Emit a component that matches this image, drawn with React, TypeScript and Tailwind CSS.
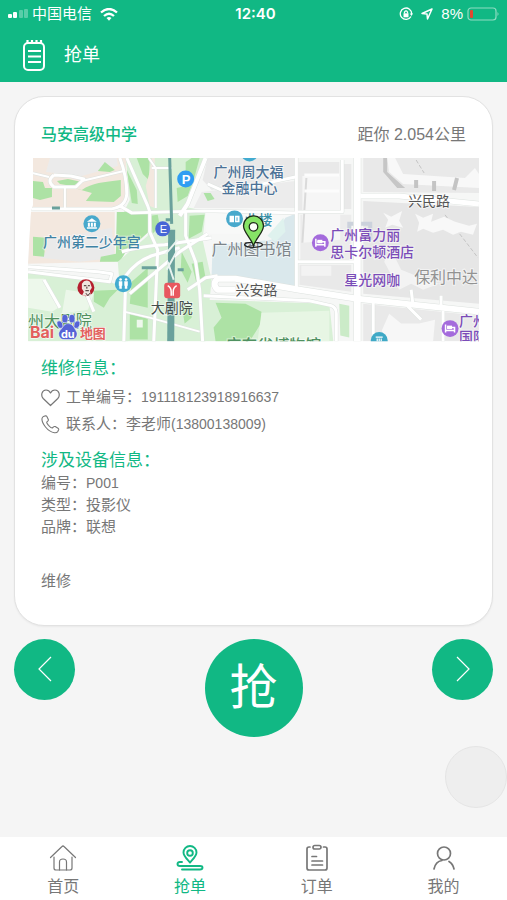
import React from 'react';

type Road = { d: string; w: number };
type Area = { d: string; fill: string };
type Label = { text: string; x: number; y: number; size: number; weight: number; fill: string };

const MINT = '#d8f0d6';
const GREEN = '#ade2a5';
const PEACH = '#f3e8df';
const GRAY = '#e9e9e9';

const areas: Area[] = [
  // upper left block
  { d: 'M28 158H126L128 200L120 208H28Z', fill: PEACH },
  { d: 'M50 158H117L118 166L82 176L46 172Z', fill: '#ebebeb' },
  { d: 'M33 181L43 182L45 188L52 188L52 197L40 200L33 198Z', fill: GREEN },
  { d: 'M98 171L105 162L115 170L110 172Z', fill: GREEN },
  { d: 'M57 181L68 179L82 182L72 186L60 184Z', fill: GREEN },
  { d: 'M74 188L82 190C92 183 104 182 121 180L121 196L114 202L86 201L92 193Z', fill: GREEN },
  // middle left block
  { d: 'M30 212H115V262L28 264Z', fill: PEACH },
  { d: 'M48 240L112 228L115 258L80 262L40 258L46 252Z', fill: '#eaeaea' },
  { d: 'M33 237L46 238L44 257L33 256Z', fill: GREEN },
  { d: 'M117 212H149V232L138 242L126 252L120 262L100 262L101 257L116 254Z', fill: GREEN },
  // green corridor
  { d: 'M126 158H205L186 207L206 211L203 240L212 280L206 342H124L118 262L148 236L149 212H124L130 200Z', fill: MINT },
  { d: 'M137 158H150L149 180L143 174Z', fill: GREEN },
  { d: 'M146 186L150 172L152 158H155V208L150 206Z', fill: PEACH },
  { d: 'M127 170L137 190L138 204L132 203Z', fill: GREEN },
  { d: 'M186 162L192 158H200L194 180L188 196L178 202L177 188L186 186Z', fill: GREEN },
  { d: 'M190 216L205 215L202 232L189 239Z', fill: GREEN },
  { d: 'M151 216L158 215L160 226L153 234Z', fill: GREEN },
  { d: 'M192 264L203 262L206 278L197 284Z', fill: GREEN },
  { d: 'M132 282L148 268V308L130 304Z', fill: GREEN },
  { d: 'M130 314L148 319V340H130Z', fill: GREEN },
  { d: 'M137 320H143V328H137Z', fill: '#eef8ec' },
  { d: 'M182 252L192 272L188 283L181 270Z', fill: GREEN },
  { d: 'M182 306L192 308L192 318L185 324Z', fill: GREEN },
  // park at the lower left
  { d: 'M28 270L110 282L128 290V342H28Z', fill: MINT },
  { d: 'M28 279H44L60 307L52 312L28 308Z', fill: '#edf8eb' },
  { d: 'M94 291L118 290L110 298L104 308L94 302Z', fill: GREEN },
  { d: 'M66 290L94 294L88 310L62 314Z', fill: '#ebf7e9' },
  // centre
  { d: 'M208 158H295V176L212 190L203 180Z', fill: GRAY },
  { d: 'M202 192L296 181V208H194Z', fill: '#ececec' },
  { d: 'M204 193L211 193L215 199L208 201Z', fill: GREEN },
  { d: 'M206 213H296V234H206Z', fill: '#f8f9f8' },
  { d: 'M213 246L272 240L286 218L296 214V288L250 282L212 275Z', fill: '#dae8ec' },
  { d: 'M268 236L284 218L286 232L276 242Z', fill: '#dff2ee' },
  { d: 'M203 300L330 304L334 342H203Z', fill: MINT },
  { d: 'M216 303L246 304L262 312V323L250 342H216L214 328L222 318Z', fill: GREEN },
  { d: 'M262 313L330 311V342H258Z', fill: '#e7f6e4' },
  { d: 'M340 304L350 306V338L341 336Z', fill: '#cbebc8' },
  // right blocks
  { d: 'M299 162H340V211H299Z', fill: GRAY },
  { d: 'M344 164H352V209H344Z', fill: GRAY },
  { d: 'M301 215H352V260H301Z', fill: '#ececec' },
  { d: 'M303 176H341V240L303 243Z', fill: '#f6f6f6' },
  { d: 'M300 265H352V292L300 285Z', fill: GRAY },
  { d: 'M364 158H480V193L364 192Z', fill: GRAY },
  { d: 'M364 201L480 207V304L364 294Z', fill: '#e6e6e6' },
  { d: 'M364 304L480 316V342H364Z', fill: GRAY },
  { d: 'M383 330L390 314L402 324H420L436 320L434 342H381Z', fill: '#f7f7f7' },
];

const roads: Road[] = [
  { d: 'M28 172L49 177M82 181L124 171M65 186V208', w: 2 },
  { d: 'M54 175L71 176L84 179L76 187L54 187Q46 181 54 175', w: 3 },
  { d: 'M28 209H112Q126 207 127 194Q127 176 120 158', w: 3 },
  { d: 'M127 158L148 206L150 212V232L158 250L154 342', w: 3 },
  { d: 'M149 158L156 168V208M152 168H172', w: 2 },
  { d: 'M120 206L132 213L205 211L296 213', w: 3 },
  { d: 'M206 158L188 204L180 216', w: 4 },
  { d: 'M186 212L186 236L196 262L200 290L203 342', w: 3 },
  { d: 'M28 267L98 272L112 274L110 282L28 272', w: 3 },
  { d: 'M122 252Q144 246 165 245L212 238', w: 3 },
  { d: 'M124 342L126 276Q136 262 152 256L180 248', w: 3 },
  { d: 'M130 294L180 252L208 234', w: 3 },
  { d: 'M124 312L150 318L200 332', w: 2 },
  { d: 'M44 280L60 308M86 293L94 312', w: 3 },
  { d: 'M188 290L206 278L218 276', w: 3 },
  { d: 'M208 184L226 192L296 177', w: 3 },
  { d: 'M297 158V288', w: 3 },
  { d: 'M343 160V212H297M297 262H357', w: 3 },
  { d: 'M358 158V342', w: 7 },
  { d: 'M361 196L400 196L480 204', w: 5 },
  { d: 'M236 290H218Q212 284 218 279H236L300 290L358 299L480 312', w: 6 },
  { d: 'M204 296L310 301L332 306Q337 308 337 314V342', w: 3 },
  { d: 'M374 303V342M408 306L422 320M444 311V342M412 290L414 306M442 296V308', w: 3 },
];

const labels: Label[] = [
  { text: '广州周大福', x: 214, y: 177, size: 14, weight: 500, fill: '#4b7297' },
  { text: '金融中心', x: 222, y: 193, size: 14, weight: 500, fill: '#4b7297' },
  { text: '广州第二少年宫', x: 43, y: 247, size: 14, weight: 500, fill: '#3f83a5' },
  { text: '业楼', x: 245, y: 225, size: 14, weight: 500, fill: '#3a90a8' },
  { text: '广州图书馆', x: 212, y: 255, size: 16, weight: 400, fill: '#7d8489' },
  { text: '兴民路', x: 409, y: 206, size: 14, weight: 400, fill: '#555555' },
  { text: '兴安路', x: 236, y: 295, size: 14, weight: 400, fill: '#555555' },
  { text: '大剧院', x: 151, y: 313, size: 14, weight: 400, fill: '#454d4a' },
  { text: '广州富力丽', x: 331, y: 240, size: 14, weight: 500, fill: '#7b4cb8' },
  { text: '思卡尔顿酒店', x: 331, y: 257, size: 14, weight: 500, fill: '#7b4cb8' },
  { text: '星光网咖', x: 345, y: 285, size: 14, weight: 500, fill: '#7b4cb8' },
  { text: '保利中达', x: 415, y: 283, size: 16, weight: 400, fill: '#929292' },
  { text: '广州', x: 460, y: 326, size: 14, weight: 500, fill: '#7b4cb8' },
  { text: '国际', x: 460, y: 342, size: 14, weight: 500, fill: '#7b4cb8' },
  { text: '州大剧院', x: 28, y: 327, size: 16, weight: 400, fill: '#4f9160' },
  { text: '广东省博物馆', x: 226, y: 351, size: 16, weight: 500, fill: '#4f9160' },
];

function MapView() {
  return (
    <svg viewBox="28 158 452 184" className="block w-full" role="img" aria-label="地图">
      <defs>
        <clipPath id="map-edge">
          <path d="M33 158H480V342H28V262L31 212L33 205Z" />
        </clipPath>
      </defs>
      <g clipPath="url(#map-edge)">
        <rect x="28" y="158" width="452" height="184" fill="#f6f7f6" />
        {areas.map((a) => (
          <path key={a.d} d={a.d} fill={a.fill} />
        ))}

        {/* Buildings */}
        <path d="M384 158V172L398 188H406L388 172V158Z" fill="#c6c6c6" />
        <path d="M388 158L390 172L404 184L480 188V174L476 168L466 178L404 174L396 158Z" fill="#f8f8f8" />
        <path d="M417 180V188M435 181V191M458 178L455 190" stroke="#c4c4c4" strokeWidth="4" />
        <path d="M417 160L425 173M446 215L479 258" stroke="#c4c4c4" strokeDasharray="4 2" />
        <path
          d="M384 213L392 217L403 211L400 221L404 228L393 225L386 228L389 220ZM416 214L424 218L434 214L432 222L445 217L456 222L470 226L478 224L474 235L462 232L454 235L444 230L434 233L424 229L418 232L420 223Z"
          fill="#f8f8f8"
        />
        <path d="M303 243L307 178" stroke="#dadada" strokeWidth="2" />
        <path d="M305 175H340M305 191H340" fill="none" stroke="#fcfcfc" strokeWidth="3" />
        <path d="M350 240V224H371V240" fill="none" stroke="#ccd2dc" strokeWidth="4" />
        <path d="M302 266H332V276H302ZM385 262L392 250L402 270L422 278L440 284L424 290L412 284L400 290Z" fill="#f3f3f3" />

        {/* Roads, casing first */}
        <g fill="none" stroke="#dde2df" strokeLinejoin="round">
          {roads.map((r) => (
            <path key={r.d} d={r.d} strokeWidth={r.w + 1} />
          ))}
        </g>
        <g fill="none" stroke="#ffffff" strokeLinejoin="round">
          {roads.map((r) => (
            <path key={r.d} d={r.d} strokeWidth={r.w} />
          ))}
        </g>

        {/* Metro line */}
        <g fill="none" stroke="#6aa19c">
          <path d="M170 158L172 224" strokeWidth="3" />
          <path d="M172 230L171 342" strokeWidth="7" />
          <path d="M142 268H157M178 270H184M52 208H60M166 220H171" strokeWidth="3" />
        </g>
        <path d="M166 254L178 240M167 270L178 250M174 280L168 262" stroke="#e9f3ef" strokeWidth="2" />

        <g
          fontFamily='"Noto Sans CJK SC", sans-serif'
          stroke="#ffffff"
          strokeWidth="2"
          strokeOpacity="0.5"
          paintOrder="stroke"
        >
          {labels.map((l) => (
            <text key={l.text} x={l.x} y={l.y} fontSize={l.size} fontWeight={l.weight} fill={l.fill}>
              {l.text}
            </text>
          ))}
        </g>

        {/* Parking */}
        <circle cx="186" cy="179" r="8.500" fill="#2f9df2" />
        <text x="182" y="184" fontFamily="Liberation Sans, sans-serif" fontSize="13" fontWeight="700" fill="#fff">P</text>
        {/* Metro exit */}
        <circle cx="163" cy="229" r="7.500" fill="#4766d6" />
        <text x="160" y="233" fontFamily="Liberation Sans, sans-serif" fontSize="11" fill="#fff">E</text>
        {/* Museum */}
        <circle cx="92" cy="224" r="8.500" fill="#48a9cc" />
        <path d="M87 222L92 218.500L97 222ZM88 223H90V227H88ZM91 223H93V227H91ZM94 223H96V227H94ZM87 227.500H97V229H87Z" fill="#fff" />
        {/* Restrooms */}
        <circle cx="123.500" cy="284" r="8.500" fill="#42abd0" />
        <path d="M119 281.500H122.500V286H122V289H119.500V286H119ZM124.500 281.500H128V286H127.500V289H125V286H124.500Z" fill="#fff" />
        <circle cx="120.800" cy="279.800" r="1.300" fill="#fff" />
        <circle cx="126.300" cy="279.800" r="1.300" fill="#fff" />
        {/* Restaurant */}
        <circle cx="86" cy="288" r="8.500" fill="#b51f2e" />
        <path d="M82 284Q85 279 90 282L92 288L90 291L91 296H82L84 292L82 289Z" fill="#efe6df" />
        <path d="M84 286H86.500M88 286H90M87 287V289M85.500 291H89M86 293.500L88 296L90 293.500" stroke="#3d2a28" strokeWidth="1" fill="none" />
        {/* Metro station */}
        <rect x="164.500" y="283" width="16" height="15.500" rx="3" fill="#e8575f" />
        <path d="M168 286Q171.500 288 171.500 292V296M177 286Q173.500 288 173.500 292V296" fill="none" stroke="#fff" strokeWidth="1.500" />
        {/* Library */}
        <circle cx="235" cy="219" r="8.500" fill="#48a9cc" />
        <path d="M230 216H234.500V222.500H230ZM235.500 216H240V222.500H235.500Z" fill="#fff" />
        <path d="M237.500 217.500V221" stroke="#48a9cc" />
        <circle cx="250" cy="153" r="8.500" fill="#42abd0" />
        {/* Hotels */}
        <circle cx="321" cy="243" r="8.500" fill="#a46bdc" />
        <path d="M316.500 239V247M316.500 245H325.500M325.500 247V242H318" fill="none" stroke="#fff" strokeWidth="1.500" />
        <rect x="318" y="240" width="5" height="3.500" fill="#fff" />
        <circle cx="451" cy="329" r="8.500" fill="#a46bdc" />
        <path d="M446.500 325V333M446.500 331H455.500M455.500 333V328H448" fill="none" stroke="#fff" strokeWidth="1.500" />
        <rect x="448" y="326" width="5" height="3.500" fill="#fff" />
        <circle cx="380" cy="341" r="8.500" fill="#3fa9c6" />
        <path d="M376.500 337.500H383.500M378 339V343M380 339V343M382 339V343" fill="none" stroke="#fff" strokeWidth="1.200" />

        {/* Baidu mark */}
        <g fontFamily='Inter, "Noto Sans CJK SC", sans-serif' stroke="#fff" strokeWidth="1" paintOrder="stroke" fill="#e2605d">
          <text x="30" y="338" fontSize="16" fontWeight="700">Bai</text>
          <text x="80" y="338" fontSize="13" fontWeight="700">地图</text>
        </g>
        <g fill="#5563d6" stroke="#fff" strokeWidth="0.500">
          <ellipse cx="60" cy="325" rx="2.800" ry="4" transform="rotate(-20 60 325)" />
          <ellipse cx="65" cy="319" rx="3" ry="4.200" />
          <ellipse cx="72" cy="319" rx="3" ry="4.200" />
          <ellipse cx="77" cy="325" rx="2.800" ry="4" transform="rotate(20 77 325)" />
          <path d="M68 324C73 324 74 328 76 331C79 335 76 340 72 340H64C60 340 57 335 60 331C63 328 64 324 68 324Z" />
        </g>
        <text x="61" y="338" fontFamily="Inter, sans-serif" fontSize="11" fontWeight="700" fill="#fff">du</text>

        {/* Current location pin */}
        <ellipse cx="254" cy="245" rx="9" ry="2.500" fill="none" stroke="#222" strokeWidth="1.200" />
        <path d="M254 246C251 237 244 233 244 226A10 10 0 0 1 264 226C264 233 257 237 254 246Z" fill="#86e466" stroke="#1e2b1a" strokeWidth="1.300" />
        <circle cx="254" cy="227" r="4.300" fill="#fbfff9" stroke="#1e2b1a" strokeWidth="1.300" />
      </g>
    </svg>
  );
}

function StatusBar() {
  return (
    <div className="grid h-7 grid-cols-3 items-center px-2 text-[15px] leading-5">
      <div className="flex items-center gap-1">
        <svg width="20" height="10" viewBox="0 0 20 10" fill="#fff">
          <rect x="0" y="5" width="4" height="4" rx="1" />
          <rect x="5" y="3" width="4" height="6" rx="1" />
          <rect x="11" y="1" width="4" height="8" rx="1" opacity="0.300" />
          <rect x="16" y="0" width="4" height="9" rx="1" opacity="0.300" />
        </svg>
        <span className="whitespace-nowrap">中国电信</span>
        <svg width="18" height="13" viewBox="0 0 18 13" className="ml-1 shrink-0" fill="none" stroke="#fff" strokeWidth="2.300">
          <path d="M1 4.500Q9 -2.500 17 4.500" />
          <path d="M4 8Q9 3.500 14 8" />
          <path d="M6.500 10Q9 8 11.500 10L9 12.800Z" fill="#fff" stroke="none" />
        </svg>
      </div>
      <span className="pl-1 text-center font-[Inter] font-semibold">12:40</span>
      <div className="flex items-center justify-end gap-1">
        <svg width="14" height="14" viewBox="0 0 14 14" className="mr-1" fill="none" stroke="#fff" strokeWidth="1.300">
          <path d="M12 9.500A5.700 5.700 0 1 1 12.700 7" />
          <path d="M10.700 6.500H14L12.500 9Z" fill="#fff" stroke="none" />
          <rect x="4.500" y="6.300" width="5" height="4" fill="#fff" stroke="none" />
          <path d="M5.500 6.500V5Q7 2.800 8.500 5V6.500" />
        </svg>
        <svg width="12" height="12" viewBox="0 0 12 12" className="mr-1" fill="none" stroke="#fff" strokeWidth="1.500" strokeLinejoin="round">
          <path d="M11 1L1 5.500L6 6L6.500 11Z" />
        </svg>
        <span>8%</span>
        <svg width="32" height="14" viewBox="0 0 32 14">
          <rect x="1" y="1" width="28" height="12" rx="3" fill="none" stroke="#8fdcc2" strokeWidth="1.200" />
          <path d="M30.500 5Q32.500 7 30.500 9Z" fill="#8fdcc2" />
          <rect x="3" y="3" width="3" height="8" rx="1" fill="#e2492f" />
        </svg>
      </div>
    </div>
  );
}

const device = [
  { label: '编号', value: 'P001' },
  { label: '类型', value: '投影仪' },
  { label: '品牌', value: '联想' },
];

const tabs = [
  {
    name: '首页',
    active: false,
    icon: (
      <g strokeWidth="1.200">
        <path d="M1.500 13.500L13 2.500Q14 1.500 15 2.500L26.500 13.500" />
        <path d="M5 13V24Q5 26 7 26H21Q23 26 23 24V13" />
        <path d="M10.500 26V18Q10.500 15 14 15Q17.500 15 17.500 18V26" />
      </g>
    ),
  },
  {
    name: '抢单',
    active: true,
    icon: (
      <g strokeWidth="1.900">
        <path d="M14 18.500C10.500 14.500 7.500 12 7.500 8.500A6.500 6.500 0 0 1 20.500 8.500C20.500 12 17.500 14.500 14 18.500Z" />
        <circle cx="14" cy="9" r="2.800" />
        <path d="M6 18H4Q1.500 18 1.500 20Q1.500 22 4 22H24Q26.500 22 26.500 23.500Q26.500 25.500 24 25.500H6" />
      </g>
    ),
  },
  {
    name: '订单',
    active: false,
    icon: (
      <g strokeWidth="1.700">
        <path d="M7 3H6Q4 3 4 5V24Q4 26 6 26H22Q24 26 24 24V5Q24 3 22 3H20.500" />
        <rect x="10" y="1.500" width="8" height="3.500" rx="1.700" />
        <path d="M9 12.500H13.500M9 17H19.500M9 21H19.500" />
      </g>
    ),
  },
  {
    name: '我的',
    active: false,
    icon: (
      <g strokeWidth="1.700">
        <circle cx="14" cy="9.500" r="6.500" />
        <path d="M4 25Q5.500 17.500 12 16.500M19 17.500Q23 20 24 25" />
      </g>
    ),
  },
];

export default function App() {
  return (
    <div className="flex min-h-screen flex-col bg-[#f5f5f5] font-['Liberation_Sans','Noto_Sans_CJK_SC',sans-serif] text-[#777777]">
      <header className="bg-[#11b884] text-white">
        <StatusBar />
        <div className="flex h-[54px] items-center gap-4 px-[22px]">
          <svg width="26" height="34" viewBox="0 0 26 34" fill="none" stroke="#fff" strokeWidth="2" className="shrink-0">
            <rect x="2" y="5" width="20" height="27" rx="4" />
            <path d="M5.500 2V6M10 2V6M14.500 2V6M19 2V6" strokeWidth="2.200" />
            <path d="M6 13H19M6 18.500H19M6 24H19" />
          </svg>
          <h1 className="text-lg leading-6">抢单</h1>
        </div>
      </header>

      <main className="flex-1 px-3.5 pt-3.5 pb-6">
        <section className="rounded-[30px] border border-[#e2e2e2] bg-white pt-[26px] pb-[33px] shadow-xs">
          <div className="flex items-center justify-between px-[26px] leading-6">
            <h2 className="font-medium text-[#11b884]">马安高级中学</h2>
            <span>距你 2.054公里</span>
          </div>

          <div className="mt-[11px] px-[13px]">
            <MapView />
          </div>

          <div className="px-[26px] pt-4 text-[15px]">
            <h3 className="text-[17px] leading-[22px] text-[#11b884]">维修信息：</h3>
            <div className="mt-1 flex h-7 items-center gap-1.5">
              <svg width="19" height="18" viewBox="0 0 19 18" fill="none" stroke="#777" strokeWidth="1.200" strokeLinejoin="round">
                <path d="M9.500 16.500L2.200 9.500C-0.500 6.500 0.800 1 5 1C7.500 1 8.800 2.500 9.500 4C10.200 2.500 11.500 1 14 1C18.200 1 19.500 6.500 16.800 9.500Z" />
              </svg>
              <p>工单编号：<span className="text-sm">191118123918916637</span></p>
            </div>
            <div className="flex h-[26px] items-center gap-1.5">
              <svg width="19" height="19" viewBox="0 0 19 19" fill="none" stroke="#777" strokeWidth="1.100" strokeLinejoin="round">
                <path d="M2.500 1.500L4.500 0.800Q5.500 0.700 6 1.700L7.300 4.500Q7.600 5.500 6.800 6.200L5.700 7.200Q5.600 8 7.500 10.300Q10 13 11.300 13L12.500 11.800Q13.200 11.200 14.200 11.600L17 13.200Q18 13.800 17.600 14.800L16.800 16.500Q16 18 13.500 17.800Q8.500 17 4.500 12Q0.500 7 1 3.500Q1.300 2 2.500 1.500Z" />
              </svg>
              <p>联系人：李老师<span className="text-sm">(13800138009)</span></p>
            </div>

            <h3 className="mt-3 text-[17px] leading-[22px] text-[#11b884]">涉及设备信息：</h3>
            {device.map((d) => (
              <p key={d.label} className="leading-[22px]">
                {d.label}：<span className={d.label === '编号' ? 'text-sm' : ''}>{d.value}</span>
              </p>
            ))}

            <p className="mt-8 leading-[22px]">维修</p>
          </div>
        </section>

        <div className="mt-[13px] flex items-start justify-between">
          <button type="button" aria-label="上一个" className="flex size-[61px] items-center justify-center rounded-full bg-[#11b884]">
            <svg width="16" height="26" viewBox="0 0 16 26" fill="none" stroke="#fff" strokeWidth="1.200">
              <path d="M14 1L2 13L14 25" />
            </svg>
          </button>
          <button type="button" className="flex size-[98px] items-center justify-center rounded-full bg-[#11b884] text-5xl text-white">
            抢
          </button>
          <button type="button" aria-label="下一个" className="flex size-[61px] items-center justify-center rounded-full bg-[#11b884]">
            <svg width="16" height="26" viewBox="0 0 16 26" fill="none" stroke="#fff" strokeWidth="1.200">
              <path d="M2 1L14 13L2 25" />
            </svg>
          </button>
        </div>
      </main>

      {/* Floating touch button */}
      <div className="fixed right-0 bottom-[92px] size-[62px] rounded-full border border-[#e4e4e4] bg-[#eeeeee]"></div>

      <nav className="grid grid-cols-4 bg-white pt-[7px] pb-px">
        {tabs.map((tab) => (
          <a
            key={tab.name}
            href="#"
            className={`flex flex-col items-center gap-[3px] leading-6 ${tab.active ? 'text-[#11b884]' : 'text-[#777777]'}`}
          >
            <svg width="28" height="28" viewBox="0 0 28 28" fill="none" stroke="currentColor" strokeLinecap="round" strokeLinejoin="round">
              {tab.icon}
            </svg>
            {tab.name}
          </a>
        ))}
      </nav>
    </div>
  );
}
